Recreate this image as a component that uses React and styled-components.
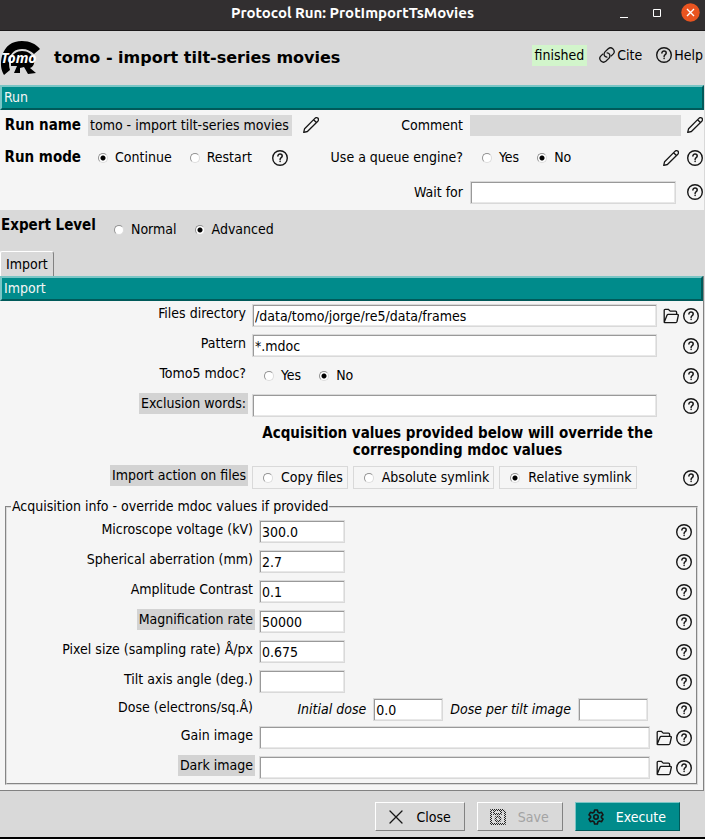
import React, { useId, useState } from "react";
import styled, { createGlobalStyle, css } from "styled-components";

const teal = "#008b8b";
const gray = "#d9d9d9";
const paper = "#f5f5f5";

const GlobalStyle = createGlobalStyle`
  *, *::before, *::after { box-sizing: border-box; }
  body { margin: 0; background: ${gray}; }
  body, input, button { font-family: "DejaVu Sans Condensed", "DejaVu Sans", sans-serif; font-size: 14px; color: #000; }
`;

const Window = styled.div`
  display: flex;
  flex-direction: column;
  min-height: 100vh;
  line-height: 21px;
  white-space: nowrap;
  background: ${gray};
  border-bottom: 2px solid #000;
`;

const TitleBar = styled.header`
  display: grid;
  grid-template-columns: 92px 1fr 92px;
  align-items: center;
  height: 31px;
  padding-bottom: 5px;
  background: #322f30;
  border-bottom: 1px solid #1c1a1b;
  color: #fff;
`;

const WindowTitle = styled.div`
  grid-column: 2;
  text-align: center;
  font-family: Ubuntu, "Noto Sans", sans-serif;
  font-weight: 700;
  font-size: 15px;
`;

const WindowButtons = styled.div`
  display: flex;
  justify-content: flex-end;
  align-items: center;
  gap: 20px;
  padding-right: 5px;
`;

const PlainButton = styled.button`
  display: flex;
  flex: none;
  padding: 0;
  border: 0;
  background: none;
  color: inherit;
`;

const Header = styled.div`
  display: flex;
  align-items: center;
  height: 54px;
  padding-right: 2px;
`;

const Heading = styled.h1`
  flex: 1;
  margin: 0 0 0 12px;
  font-family: "DejaVu Sans", sans-serif;
  font-size: 16px;
  line-height: 24px;
`;

const HeaderAside = styled.div`
  display: flex;
  align-items: center;
  padding-bottom: 6px;
`;

const Status = styled.span`
  padding: 0 3px;
  margin-right: 12px;
  background: #d2f5cb;
`;

const HeaderLink = styled.a`
  display: flex;
  align-items: center;
  gap: 2px;
  color: #000;
  text-decoration: none;
  & + & { margin-left: 14px; }
`;

const Banner = styled.h2`
  flex: none;
  height: 25px;
  margin: 0 ${(p) => (p.$flush ? 0 : 1)}px 0 0;
  padding: 0 2px;
  background: ${teal};
  border: 2px solid;
  border-color: #7ac5c5 #005a5a #005a5a #7ac5c5;
  color: #f5f5f5;
  font-size: 14px;
  font-weight: 400;
  line-height: 21px;
`;

const RunPanel = styled.section`
  display: flex;
  flex-direction: column;
  height: 100px;
  margin-right: 1px;
  padding: 4px 0;
  background: ${paper};
`;

const RunRow = styled.div`
  display: grid;
  grid-template-columns: 81px 172px 67px 143px 1fr auto;
  align-items: center;
  height: ${(p) => p.$height}px;
  padding-right: 1px;
`;

const RunLabel = styled.label`
  grid-row: 1;
  grid-column: ${(p) => p.$column};
  text-align: right;
  font-size: ${(p) => (p.$bold ? 15 : 14)}px;
  font-weight: ${(p) => (p.$bold ? 700 : 400)};
`;

const RunField = styled.div`
  display: flex;
  grid-row: 1;
  grid-column: ${(p) => p.$column};
  padding-left: 7px;
  margin-right: ${(p) => p.$end || 0}px;
`;

const RunIcons = styled.div`
  display: flex;
  gap: 8px;
  grid-row: 1;
  grid-column: ${(p) => p.$column};
  padding-left: ${(p) => p.$start || 6}px;
`;

const FlatInput = styled.input`
  width: 100%;
  min-width: 0;
  height: 21px;
  padding: 0 2px;
  border: 0;
  border-radius: 0;
  outline: 0;
  background: ${gray};
`;

const TextInput = styled.input`
  width: ${(p) => (p.$width ? p.$width + "px" : "100%")};
  min-width: 0;
  height: 23px;
  padding: 0 2px;
  border: 1px solid ${gray};
  box-shadow: inset 1px 1px #999, inset -1px -1px #e8e8e8;
  border-radius: 0;
  outline: 0;
  background: #fff;
`;

const RadioInput = styled.input`
  appearance: none;
  flex: none;
  width: 10px;
  height: 10px;
  margin: 0;
  border: 1px solid;
  border-color: #929292 #dcdcdc #dcdcdc #929292;
  border-radius: 50%;
  background: #fff;
  &:checked { background: radial-gradient(circle, #000 0 2px, #fff 3px); }
`;

const RadioLabel = styled.label`
  display: flex;
  align-items: center;
  gap: 7px;
  ${(p) =>
    p.$boxed &&
    css`
      height: 23px;
      padding: 0 4px 0 10px;
      border: 1px solid ${gray};
      gap: 8px;
    `}
`;

const RadioSet = styled.div`
  display: flex;
  align-items: center;
  gap: ${(p) => p.$gap || 18}px;
  padding-left: ${(p) => p.$start || 0}px;
  min-height: 23px;
`;

const ExpertRow = styled.section`
  display: flex;
  height: 40px;
  padding: 5px 0 0 1px;
`;

const ExpertLabel = styled.strong`
  width: 96px;
  font-size: 15px;
`;

const ExpertOptions = styled.div`
  padding: 3px 0 0 17px;
`;

const TabList = styled.div`
  display: flex;
`;

const Tab = styled.button`
  height: 25px;
  margin-top: 1px;
  padding: 0 5px;
  border: 1px solid;
  border-color: #fff #828282 ${gray} #fff;
  border-bottom: 0;
  border-radius: 2px 3px 0 0;
  background: ${gray};
`;

const ImportPanel = styled.main`
  display: flex;
  flex-direction: column;
  margin-right: 1px;
  background: ${paper};
  border: solid #828282;
  border-width: 0 1px 1px 0;
`;

const FormRow = styled.div`
  display: grid;
  grid-template-columns: 248px 1fr auto;
  height: ${(p) => p.$height || 30}px;
  padding: 2px 4px 0 0;
`;

const LabelCell = styled.div`
  display: flex;
  justify-content: flex-end;
  align-items: flex-start;
`;

const FieldLabel = styled.label`
  padding: 0 2px;
  background: ${(p) => (p.$marked ? "#d3d3d3" : "transparent")};
`;

const FieldCell = styled.div`
  display: flex;
  align-items: flex-start;
  padding: 1px 0 0 4px;
`;

const IconCell = styled.div`
  display: flex;
  align-items: flex-start;
  gap: 4px;
  min-width: 42px;
  justify-content: flex-end;
  padding: 5px 0 0 6px;
`;

const Note = styled.p`
  margin: 0 42px 0 254px;
  padding: 4px 0;
  height: 42px;
  font-size: 15px;
  font-weight: 700;
  line-height: 17px;
  text-align: center;
  white-space: normal;
`;

const Group = styled.fieldset`
  min-width: 0;
  margin: 3px 5px 5px;
  padding: 0 0 2px;
  border: 2px groove ${gray};
`;

const Legend = styled.legend`
  margin-left: 4px;
  padding: 0 1px;
`;

const Doses = styled.div`
  display: flex;
  align-items: center;
  justify-content: flex-end;
  flex: 1;
  gap: 7px;
  padding-right: 2px;
  font-style: italic;
`;

const Footer = styled.footer`
  display: flex;
  justify-content: flex-end;
  gap: 12px;
  padding: 11px 25px 6px;
`;

const ActionButton = styled.button`
  display: flex;
  align-items: center;
  height: 29px;
  padding: 0 13px 0 12px;
  gap: 12px;
  border: 1px solid;
  border-color: ${(p) => (p.$primary ? "#7ac5c5 #005a5a #005a5a #7ac5c5" : "#fff #828282 #828282 #fff")};
  background: ${(p) => (p.$primary ? teal : gray)};
  color: ${(p) => (p.$primary ? "#fff" : "#000")};
  &:disabled { color: #a3a3a3; }
`;

const Drawing = styled.svg.attrs({ viewBox: "0 0 16 16", fill: "none", "aria-hidden": true })`
  display: block;
  flex: none;
  width: 16px;
  height: 16px;
  stroke: #161616;
  stroke-width: 1.3;
  stroke-linecap: round;
  stroke-linejoin: round;
`;

const HelpIcon = () => (
  <Drawing>
    <circle cx="8" cy="8" r="7.3" strokeWidth="1.4" />
    <path strokeWidth="1.5" d="M5.9 6.1C5.9 3.2 10.2 3.4 10.2 6C10.2 7.7 8.1 7.5 8.1 9.4M8.1 11.3V11.5" />
  </Drawing>
);

const PencilIcon = () => (
  <Drawing>
    <path d="M.7 15.4 1.6 11.7 11.9 1.4Q13.2 .1 14.8 1Q16.2 2.7 14.8 4.2L4.4 14.5ZM10.6 2.7 13.4 5.5" />
  </Drawing>
);

const FolderIcon = () => (
  <Drawing>
    <path d="M1.2 14.2V2.2Q1.2 1.3 2.1 1.3H5.3L7.2 3.1H12.5Q13.6 3.1 13.6 4.2V6.4M1.2 14.2 4 7.2Q4.3 6.4 5.1 6.4H14.5Q15.5 6.4 15.3 7.5L14 13.5Q13.8 14.6 12.7 14.6H2Q1.2 14.6 1.2 14.2Z" />
  </Drawing>
);

const LinkIcon = () => (
  <Drawing>
    <path d="M7.9 10.2Q4.6 9.6 5.2 6.4Q5.4 5.4 6.2 4.6L9.2 1.7Q11.6-.2 14 1.9Q16.4 4.6 14.3 6.9L12.3 8.9M8.1 5.8Q11.4 6.4 10.8 9.6Q10.6 10.6 9.8 11.4L6.8 14.3Q4.4 16.2 2 14.1Q-.4 11.4 1.7 9.1L3.7 7.1" />
  </Drawing>
);

const CrossIcon = () => (
  <Drawing>
    <path d="M2 2 14 14M14 2 2 14" />
  </Drawing>
);

const SaveIcon = () => (
  <Drawing>
    <defs>
      <pattern id="stipple" width="2" height="2" patternUnits="userSpaceOnUse">
        <path d="M0 0H1V1H0ZM1 1H2V2H1Z" fill="#222" stroke="none" />
      </pattern>
    </defs>
    <path stroke="url(#stipple)" strokeWidth="2" d="M1 1H13L15 3V15H1ZM4 1V5H11V1" />
    <circle cx="8" cy="10" r="2.4" stroke="url(#stipple)" strokeWidth="2" />
  </Drawing>
);

const GearIcon = () => (
  <Drawing>
    <path strokeWidth="1.6" d="M6.6 1H9.4L9.9 3.1 11.4 4 13.6 3.3 15 5.8 13.4 7.3V8.7L15 10.2 13.6 12.7 11.4 12 9.9 12.9 9.4 15H6.6L6.1 12.9 4.6 12 2.4 12.7 1 10.2 2.6 8.7V7.3L1 5.8 2.4 3.3 4.6 4 6.1 3.1Z" />
    <circle cx="8" cy="8" r="2.2" strokeWidth="1.6" />
  </Drawing>
);

const LogoArt = styled.svg`
  display: block;
  flex: none;
  width: 42px;
  height: 38px;
`;

const Logo = () => (
  <LogoArt viewBox="0 0 42 38" role="img" aria-label="Tomo">
    <path d="M2 17C5 7 12 2 22 2C30 2 36 5 40 10L34 15C31 12 27 10 22 10C15 10 11 14 9 20V25Q9 28 10 31L4 36C1 31 0 25 2 17Z" />
    <path d="M11 20C12 15 17 12 22 12C28 12 32 15 34 20C35 25 33 28 30 29L36 34 28 35 24 28 20 29V34L14 34 17 27H11Z" />
    <text x="1" y="24" fill="#fff" fontFamily="Noto Sans, sans-serif" fontSize="14" fontWeight="700" fontStyle="italic">Tomo</text>
  </LogoArt>
);

const CloseDot = styled.svg`
  display: block;
  width: 19px;
  height: 19px;
`;

function Help() {
  return <PlainButton type="button" aria-label="Help"><HelpIcon /></PlainButton>;
}
function Edit() {
  return <PlainButton type="button" aria-label="Edit"><PencilIcon /></PlainButton>;
}
function Browse() {
  return <PlainButton type="button" aria-label="Browse"><FolderIcon /></PlainButton>;
}

function Radios({ label, options, initial, boxed, gap, start }) {
  const name = useId();
  const [value, setValue] = useState(initial);
  return (
    <RadioSet role="radiogroup" aria-label={label} $gap={gap} $start={start}>
      {options.map((option) => (
        <RadioLabel key={option} $boxed={boxed}>
          <RadioInput type="radio" name={name} checked={value === option} onChange={() => setValue(option)} />
          {option}
        </RadioLabel>
      ))}
    </RadioSet>
  );
}

function Field({ label, marked, browse, value = "", width, height, children }) {
  const id = useId();
  return (
    <FormRow $height={height}>
      <LabelCell>
        <FieldLabel as={children ? "span" : "label"} htmlFor={children ? undefined : id} $marked={marked}>{label}</FieldLabel>
      </LabelCell>
      <FieldCell>{children || <TextInput id={id} defaultValue={value} $width={width} />}</FieldCell>
      <IconCell>{browse && <Browse />}<Help /></IconCell>
    </FormRow>
  );
}

export default function App() {
  return (
    <>
      <GlobalStyle />
      <Window>
        <TitleBar>
          <WindowTitle>Protocol Run: ProtImportTsMovies</WindowTitle>
          <WindowButtons>
            <PlainButton type="button" aria-label="Minimize">
              <svg width="18" height="10"><path d="M5 9.5H13" stroke="#fff" /></svg>
            </PlainButton>
            <PlainButton type="button" aria-label="Maximize">
              <svg width="8" height="8"><path d="M.5.5H7.5V7.5H.5Z" fill="none" stroke="#fff" /></svg>
            </PlainButton>
            <PlainButton type="button" aria-label="Close window">
              <CloseDot viewBox="0 0 19 19">
                <circle cx="9.5" cy="9.5" r="9.2" fill="#e95420" />
                <path d="M6 6 13 13M13 6 6 13" stroke="#fff" strokeWidth="1.4" />
              </CloseDot>
            </PlainButton>
          </WindowButtons>
        </TitleBar>

        <Header>
          <Logo />
          <Heading>tomo - import tilt-series movies</Heading>
          <HeaderAside>
            <Status>finished</Status>
            <HeaderLink href="#cite"><LinkIcon />Cite</HeaderLink>
            <HeaderLink href="#help"><HelpIcon />Help</HeaderLink>
          </HeaderAside>
        </Header>

        <Banner>Run</Banner>
        <RunPanel>
          <RunRow $height={23}>
            <RunLabel $column={1} $bold htmlFor="run-name">Run name</RunLabel>
            <RunField $column="2 / 4" $end={28}><FlatInput id="run-name" defaultValue="tomo - import tilt-series movies" /></RunField>
            <RunIcons $column="3" $start={50}><Edit /></RunIcons>
            <RunLabel $column={4} htmlFor="comment">Comment</RunLabel>
            <RunField $column="5"><FlatInput id="comment" /></RunField>
            <RunIcons $column="6"><Edit /></RunIcons>
          </RunRow>
          <RunRow $height={42}>
            <RunLabel as="span" $column={1} $bold>Run mode</RunLabel>
            <RunField $column="2"><Radios label="Run mode" options={["Continue", "Restart"]} initial="Continue" start={10} /></RunField>
            <RunIcons $column="3" $start={19}><Help /></RunIcons>
            <RunLabel as="span" $column={4}>Use a queue engine?</RunLabel>
            <RunField $column="5"><Radios label="Use a queue engine?" options={["Yes", "No"]} initial="No" start={12} /></RunField>
            <RunIcons $column="6"><Edit /><Help /></RunIcons>
          </RunRow>
          <RunRow $height={28}>
            <RunLabel $column={4} htmlFor="wait">Wait for</RunLabel>
            <RunField $column="5" $end={5}><TextInput id="wait" /></RunField>
            <RunIcons $column="6"><Help /></RunIcons>
          </RunRow>
        </RunPanel>

        <ExpertRow>
          <ExpertLabel>Expert Level</ExpertLabel>
          <ExpertOptions>
            <Radios label="Expert Level" options={["Normal", "Advanced"]} initial="Advanced" />
          </ExpertOptions>
        </ExpertRow>

        <TabList role="tablist"><Tab type="button" role="tab" aria-selected="true">Import</Tab></TabList>

        <ImportPanel>
          <Banner $flush>Import</Banner>
          <Field label="Files directory" value="/data/tomo/jorge/re5/data/frames" browse />
          <Field label="Pattern" value="*.mdoc" />
          <Field label="Tomo5 mdoc?"><Radios label="Tomo5 mdoc?" options={["Yes", "No"]} initial="No" start={12} /></Field>
          <Field label="Exclusion words:" marked />
          <Note>Acquisition values provided below will override the corresponding mdoc values</Note>
          <Field label="Import action on files" marked>
            <Radios label="Import action on files" options={["Copy files", "Absolute symlink", "Relative symlink"]} initial="Relative symlink" boxed gap={5} />
          </Field>
          <Group>
            <Legend>Acquisition info - override mdoc values if provided</Legend>
            <Field label="Microscope voltage (kV)" value="300.0" width={86} />
            <Field label="Spherical aberration (mm)" value="2.7" width={86} />
            <Field label="Amplitude Contrast" value="0.1" width={86} />
            <Field label="Magnification rate" value="50000" width={86} marked />
            <Field label="Pixel size (sampling rate) Å/px" value="0.675" width={86} />
            <Field label="Tilt axis angle (deg.)" width={86} height={28} />
            <Field label="Dose (electrons/sq.Å)" height={28}>
              <Doses>
                <label htmlFor="initial-dose">Initial dose</label>
                <TextInput id="initial-dose" defaultValue="0.0" $width={70} />
                <label htmlFor="tilt-dose">Dose per tilt image</label>
                <TextInput id="tilt-dose" $width={70} />
              </Doses>
            </Field>
            <Field label="Gain image" browse />
            <Field label="Dark image" marked browse height={28} />
          </Group>
        </ImportPanel>

        <Footer>
          <ActionButton type="button"><CrossIcon />Close</ActionButton>
          <ActionButton type="button" disabled><SaveIcon />Save</ActionButton>
          <ActionButton type="button" $primary><GearIcon />Execute</ActionButton>
        </Footer>
      </Window>
    </>
  );
}
